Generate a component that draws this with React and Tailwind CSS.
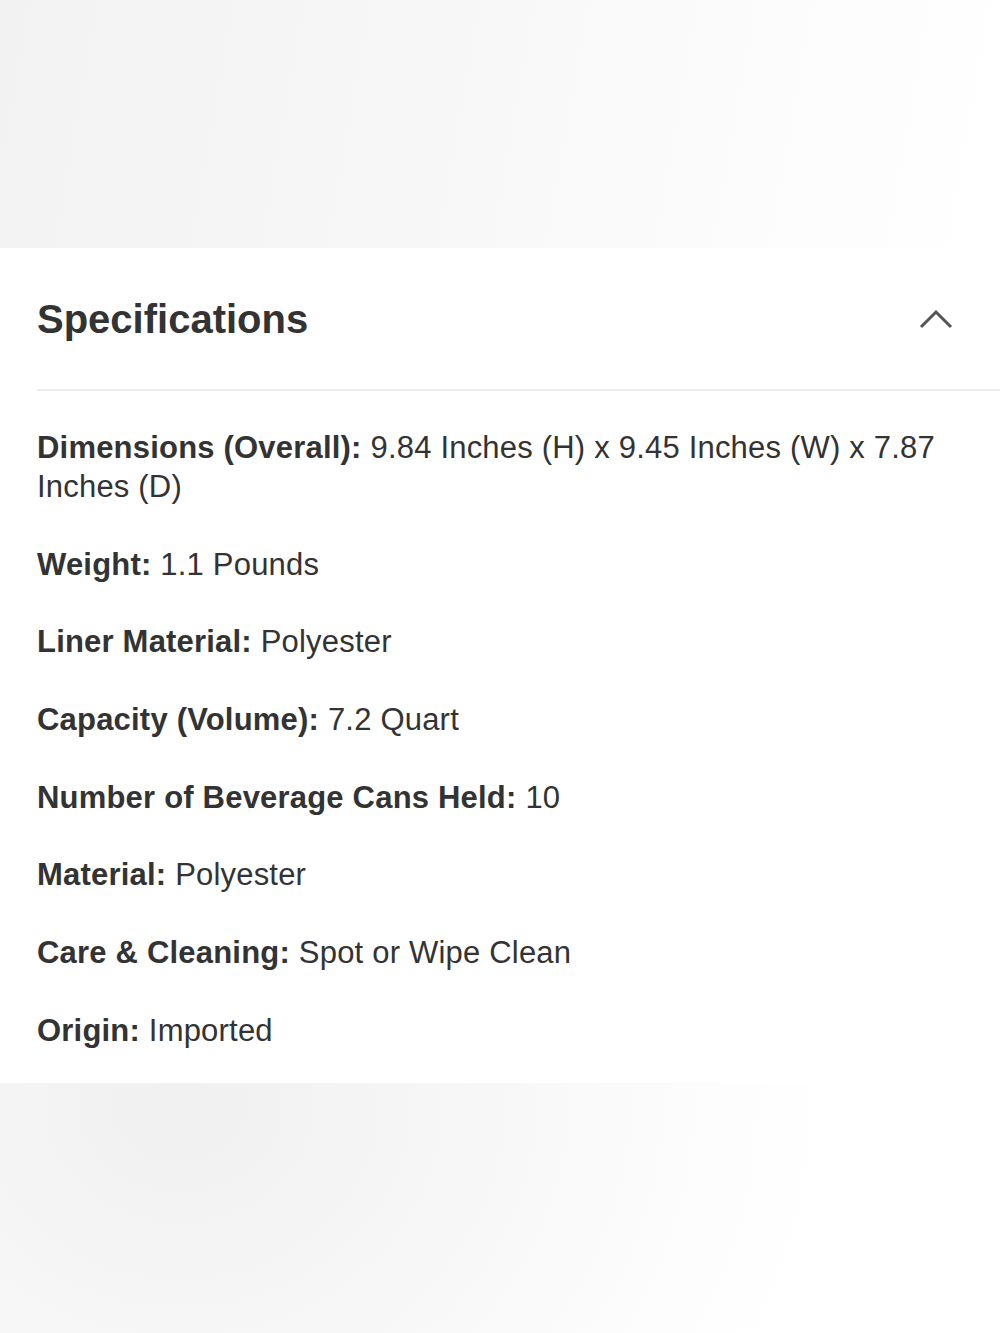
const specs = [
  { label: 'Dimensions (Overall):', value: '9.84 Inches (H) x 9.45 Inches (W) x 7.87 Inches (D)' },
  { label: 'Weight:', value: '1.1 Pounds' },
  { label: 'Liner Material:', value: 'Polyester' },
  { label: 'Capacity (Volume):', value: '7.2 Quart' },
  { label: 'Number of Beverage Cans Held:', value: '10' },
  { label: 'Material:', value: 'Polyester' },
  { label: 'Care & Cleaning:', value: 'Spot or Wipe Clean' },
  { label: 'Origin:', value: 'Imported' },
];

export default function App() {
  return (
    <div className="flex min-h-[1333px] w-[1000px] flex-col bg-white font-['Liberation_Sans',Arial,sans-serif] text-[#333]">
      <div className="h-[248px] bg-[linear-gradient(100deg,#f2f2f2_0%,#f6f6f6_35%,#fbfbfb_70%,#ffffff_100%)]" />

      <section className="bg-white pb-[33px]">
        <div className="flex h-[141px] items-center justify-between pl-[37px] pr-[47px]">
          <h2 className="text-[40px] font-bold text-[#333]">Specifications</h2>
          <svg width="34" height="20" viewBox="0 0 34 20" fill="none">
            <path d="M2 18 L17 3 L32 18" stroke="#555" strokeWidth="3" />
          </svg>
        </div>
        <div className="ml-[37px] h-[2px] bg-[#ececec]" />

        <div className="flex flex-col gap-[38.7px] pl-[37px] pr-[50px] pt-[37px] text-[31px] leading-[39px] tracking-[0.2px]">
          {specs.map((s) => (
            <p key={s.label}>
              <span className="font-bold">{s.label}</span> {s.value}
            </p>
          ))}
        </div>
      </section>

      <div className="flex-1 bg-[radial-gradient(ellipse_700px_620px_at_180px_20px,#f0f0f0_0%,#f4f4f4_25%,#f9f9f9_55%,#fefefe_85%,#ffffff_100%)]" />
    </div>
  );
}
